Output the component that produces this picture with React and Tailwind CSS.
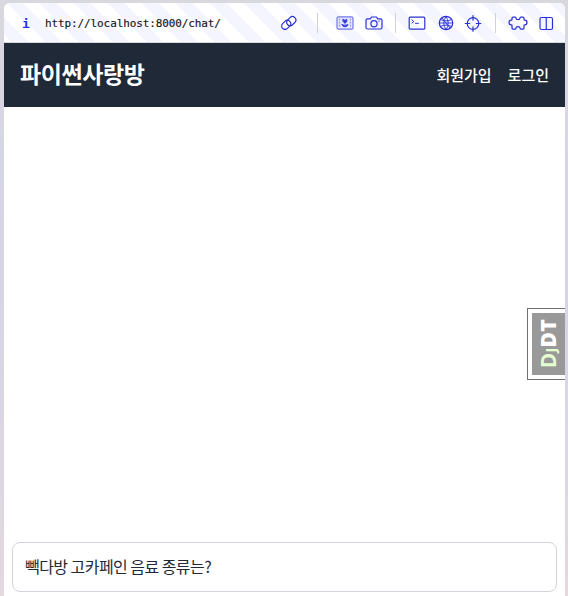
const I = ({ className, children }) => (
  <svg viewBox="0 0 18 18" className={`h-[18px] w-[18px] shrink-0 fill-none stroke-[#2a32d6] ${className ?? ""}`} strokeWidth="1.2" strokeLinecap="round" strokeLinejoin="round">{children}</svg>
);

export default function App() {
  return (
    <div className="flex h-[596px] w-[568px] overflow-hidden bg-[linear-gradient(180deg,#d9d8de_0%,#d6d5e5_30%,#d8d5e4_60%,#e3d9df_100%)] pt-[3px] pr-[3px] pl-1 font-['Noto_Sans_CJK_KR',sans-serif]">
      <main className="flex min-w-0 flex-1 flex-col overflow-hidden rounded-t-md bg-white">
        <div className="flex h-10 shrink-0 items-center border-b border-[#d8d9df] bg-[repeating-linear-gradient(45deg,#ffffff_0px,#ffffff_5px,#f5f5ff_5px,#f5f5ff_17px,#ffffff_17px,#ffffff_24px)]">
          <span className="ml-[18px] w-[23px] pt-[3px] font-['DejaVu_Sans_Mono',monospace] text-[13px] font-bold text-[#2930ec]">i</span>
          <span className="w-[235px] pt-[3px] font-['DejaVu_Sans_Mono',monospace] text-[11px] tracking-[-0.11px] text-[#17171b] [-webkit-text-stroke:0.15px_#17171b]">http://localhost:8000/chat/</span>
          <I>
            <rect x="1.200" y="7.500" width="10" height="6.800" rx="3.400" transform="rotate(-45 6.200 10.900)" />
            <rect x="6.300" y="3.800" width="10" height="6.800" rx="3.400" transform="rotate(-45 11.300 7.200)" />
          </I>
          <i className="ml-[19px] h-5 w-px bg-[#d1d1d7]" />
          <I className="ml-[18px]">
            <rect x="1" y="2.800" width="16" height="12.400" rx="1.500" className="fill-[#e6e7ff] stroke-[#7278ee]" />
            <path d="M3.500 5v8M14.500 5v8" strokeDasharray="1 2" className="stroke-[#9499f2]" />
            <path d="M7.200 5.300l1.800 1 1.800-1v2.400L9 8.900 7.200 7.700zM9 9v3.500M6 10.500q2 0 3 2 1-2 3-2-.5 2.300-3 2.300t-3-2.300" className="fill-[#3038d8]" strokeWidth=".8" />
          </I>
          <I className="ml-[11px]">
            <path d="M2.500 4.800h3l1-1.800h5l1 1.800h3q1.500 0 1.500 1.500v7.200q0 1.500-1.500 1.500h-13Q1 15 1 13.500V6.300q0-1.500 1.500-1.500zM13.800 7h.4" />
            <circle cx="9" cy="9.700" r="3.100" />
          </I>
          <i className="ml-[12px] h-5 w-px bg-[#d1d1d7]" />
          <I className="ml-3"><rect x="1.200" y="3.200" width="15.600" height="12" rx="1" /><path d="M4 6l1.800 1.500L4 9M7.500 9.300h3" strokeWidth="1" /></I>
          <I className="ml-[11px]">
            <circle cx="9" cy="9" r="6.700" />
            <path d="M9 2.300Q4.500 9 9 15.700Q13.500 9 9 2.300M2.300 9h13.400M3.500 5.500q5.500 3 11 0M3.500 12.500q5.500-3 11 0M5 4l8 10" strokeWidth=".9" />
          </I>
          <I className="ml-[9px]"><circle cx="9" cy="9.500" r="5.800" /><path d="M9 1.700v4.500M9 12.800v4.500M1.200 9.500h4.500M12.300 9.500h4.500" /></I>
          <i className="ml-[13px] h-5 w-px bg-[#d1d1d7]" />
          <svg viewBox="0 0 20 18" className="ml-3 h-[18px] w-5 shrink-0 fill-none stroke-[#2a32d6]" strokeWidth="1.250" strokeLinejoin="round">
            <path d="M5 3h2.200q.8 0 .8.900 0 1.600 2 1.600t2-1.600q0-.9.800-.900H15q1 0 1 1v1.500q0 .7.800.7 2.200 0 2.200 2.300t-2.200 2.300q-.8 0-.8.800V14q0 1-1 1h-2.200q-.8 0-.8-.9 0-1.600-2-1.600t-2 1.600q0 .9-.8.900H5q-1 0-1-1v-2.400q0-.8-.8-.8Q1 10.800 1 8.500t2.200-2.300q.8 0 .8-.7V4q0-1 1-1z" />
          </svg>
          <I className="ml-[9px]"><rect x="3" y="3.500" width="12.500" height="12" rx="1.500" /><path d="M9.250 3.500v12" /></I>
        </div>
        <header className="flex h-16 shrink-0 items-center justify-between bg-[#1f2937] px-4 text-white">
          <h1 className="pb-1 text-[23px] font-bold tracking-[-0.4px]">파이썬사랑방</h1>
          <nav className="flex gap-4 text-[15px] font-medium"><span>회원가입</span><span>로그인</span></nav>
        </header>
        <section className="flex min-h-0 flex-1 items-center justify-end">
          <div className="mt-[38px] h-[72px] w-[38px] border border-r-0 border-[#707070] bg-white py-1 pl-1">
            <div className="flex h-full items-center justify-center bg-[#999]">
              <span className="-rotate-90 font-['Open_Sans',sans-serif] text-[21px] font-bold tracking-[0.2px] text-white"><span className="text-[#e4ffd0]">D<span className="text-[15px]">J</span></span><span className="font-extrabold">DT</span></span>
            </div>
          </div>
        </section>
        <footer className="h-[54px] shrink-0 px-2">
          <div className="flex h-[50px] items-center rounded-lg border border-[#d1d5db] px-3 pb-[2px] text-[16px] tracking-[-0.55px] text-[#1f2937]">빽다방 고카페인 음료 종류는?</div>
        </footer>
      </main>
    </div>
  );
}
